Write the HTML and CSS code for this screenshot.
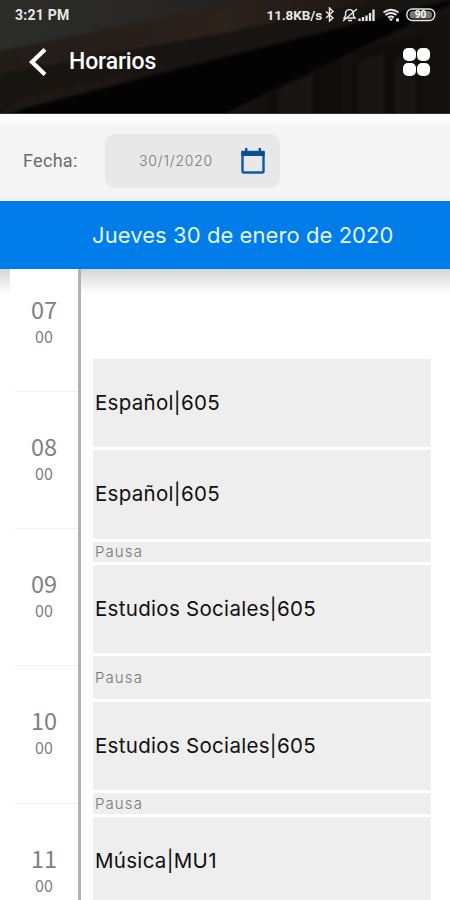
FILE: index.html
```html
<!DOCTYPE html>
<html lang="es">
<head>
<meta charset="utf-8">
<title>Horarios</title>
<link rel="stylesheet" href="styles.css">
</head>
<body>
<header class="top">
  <svg class="photo" viewBox="0 0 450 114" preserveAspectRatio="none" aria-hidden="true">
    <defs>
      <linearGradient id="wall" x1="0" y1="0" x2="1" y2="0"><stop offset="0" stop-color="#2c2d29"/><stop offset=".6" stop-color="#24211d"/><stop offset="1" stop-color="#14110f"/></linearGradient>
      <linearGradient id="beam" x1="0" y1="0" x2="1" y2="0"><stop offset="0" stop-color="#211b17"/><stop offset=".5" stop-color="#2c211b"/><stop offset="1" stop-color="#15100d"/></linearGradient>
      <filter id="soft" x="-5%" y="-5%" width="110%" height="110%" color-interpolation-filters="sRGB"><feGaussianBlur stdDeviation="1.5"/></filter>
    </defs>
    <rect width="450" height="114" fill="url(#wall)"/>
    <g filter="url(#soft)">
      <path d="M-5 52 225 6 260-5H460V120H-5Z" fill="url(#beam)"/>
      <path d="M-5 75 225 33 400-5H460V120H-5Z" fill="#171411"/>
      <path d="M20 98 125 74V120H-5Z" fill="#1e1814"/>
      <path d="M-5 120 25 108 225 57 450 0V120Z" fill="#030303"/>
      <path d="M225 113 450 5V120H225Z" fill="#14120f"/>
      <path d="M268 93 342 58V120H268ZM352 53 424 35V120H352Z" fill="#0f0e0c"/>
      <path d="M278 90 312 74V120H278ZM358 62 384 52V120H358ZM395 58H416V120H395Z" fill="#181512"/>
    </g>
    <rect y="113" width="450" height="1" fill="#30302e"/>
  </svg>
  <div class="status">
    <span class="clock">3:21 PM</span>
    <span class="net">11.8KB/s</span>
    <svg class="indicators" width="114" height="16" viewBox="0 0 114 16" fill="none" stroke="#e8e8e8" stroke-width="1.4">
      <path d="M2 4.5 9 11 5.5 14V1L9 4.5 2 11"/>
      <path d="M20 11h11l-1.6-2.2V6.5a4 4 0 0 0-7.7-1.4L21.500 8.500ZM24 13.500h4M19 14 33 2"/>
      <g stroke-width="2.300"><path d="M35.500 14v-2.500M39 14v-4M42.500 14V8.500M46 14V6M49.500 14V2.500"/></g>
      <path d="M59.500 5.500q7.500-5.500 15 0M61.500 8q5.500-4 11 0M64 10.500q3-2 6 0" stroke-width="1.900"/>
      <path d="m64.500 11.500 2.500 2.800 2.500-2.800ZM72 11.500h3v3h-3Z" fill="#e8e8e8" stroke="none"/>
      <rect x="82.800" y="2" width="28" height="11.500" rx="5.500"/>
      <rect x="85.500" y="4" width="22.500" height="7.500" rx="3.500" fill="#777" stroke="none"/>
      <text x="96.500" y="11.400" class="charge">90</text>
    </svg>
  </div>
  <div class="nav">
    <svg class="back" width="20" height="30" viewBox="0 0 20 30"><path d="M18 2.500 5 15l13 12.500" fill="none" stroke="#fff" stroke-width="4.200"/></svg>
    <h1>Horarios</h1>
    <div class="apps"><i></i><i></i><i></i><i></i></div>
  </div>
</header>
<section class="filter">
  <span class="label">Fecha:</span>
  <div class="date">
    <span>30/1/2020</span>
    <svg width="26" height="28" viewBox="0 0 26 28"><path d="M2.500 5h21v19.200q0 1.300-1.300 1.300H3.800q-1.300 0-1.300-1.300Z" fill="none" stroke="#0f59a8" stroke-width="2.400"/><path d="M1.300 4.500h23.400V9H1.300ZM5 1h2.400v4H5ZM18.600 1H21v4h-2.400Z" fill="#0f4c94"/></svg>
  </div>
</section>
<h2 class="day"><span>Jueves 30 de enero de 2020</span></h2>
<main class="schedule">
  <div class="hours">
    <div class="hour first"><b>07</b><small>00</small></div>
    <div class="hour"><b>08</b><small>00</small></div>
    <div class="hour"><b>09</b><small>00</small></div>
    <div class="hour"><b>10</b><small>00</small></div>
    <div class="hour"><b>11</b><small>00</small></div>
  </div>
  <div class="events">
    <div class="event lesson">Español|605</div>
    <div class="event lesson">Español|605</div>
    <div class="event pause">Pausa</div>
    <div class="event lesson">Estudios Sociales|605</div>
    <div class="event pause long">Pausa</div>
    <div class="event lesson">Estudios Sociales|605</div>
    <div class="event pause">Pausa</div>
    <div class="event lesson">Música|MU1</div>
  </div>
</main>
</body>
</html>
```
FILE: styles.css
```css
* { box-sizing: border-box; }
body { margin: 0; height: 900px; overflow: hidden; background: #fff; font-family: Inter, sans-serif; }
.top { position: relative; height: 114px; color: #fff; font-family: Roboto, sans-serif; }
.photo { position: absolute; inset: 0; width: 100%; height: 100%; z-index: -1; }
.status { height: 30px; display: flex; align-items: center; padding: 0 12px 0 15px; font-weight: 700; color: #e8e8e8; }
.clock { font-size: 14px; letter-spacing: .25px; }
.net { margin-left: auto; margin-right: 2px; font-size: 13.5px; letter-spacing: -.1px; }
.charge { font: 700 10px Roboto, sans-serif; fill: #fff; stroke: none; text-anchor: middle; }
.nav { height: 64px; display: flex; align-items: center; padding: 0 20px 0 27px; }
.nav h1 { margin: 0 auto 0 22px; font-size: 23px; font-weight: 500; line-height: 28px; letter-spacing: -.15px; padding-bottom: 1px; }
.apps { display: grid; grid-template-columns: 13px 13px; gap: 1.5px; }
.apps i { height: 13px; border-radius: 5px; background: #fff; }
.filter { height: 87px; display: flex; align-items: center; padding: 6px 24px 0 23px; background: linear-gradient(#fff 5px, #f4f4f5 12px, #f4f4f5 80px, #eff0f2); }
.label { width: 82px; font: 400 18px Roboto, sans-serif; letter-spacing: .3px; color: #6c6c6c; }
.date { width: 175px; height: 54px; display: flex; align-items: center; justify-content: space-between; padding: 0 14px 0 34px; border-radius: 10px; background: #e8e8e8; font-size: 14px; font-weight: 300; letter-spacing: .8px; color: #777; }
.day { position: relative; z-index: 1; margin: 0; height: 68px; padding-left: 92px; background: #007de8; color: #e2f5ff; font-size: 22px; font-weight: 400; line-height: 68px; letter-spacing: .07px; white-space: nowrap; }
.schedule { height: 631px; display: flex; padding-left: 10px; background: linear-gradient(#d4d4d4, #ececec 13px, #fff 25px); }
.hours { width: 71px; background: #fff; border-right: 3px solid #b3b3b3; }
.hour { height: 137.200px; display: flex; flex-direction: column; align-items: center; padding-top: 41px; margin-left: 5px; padding-right: 5px; border-bottom: 1px solid #efefef; font-family: "Noto Sans CJK SC", sans-serif; color: #808080; }
.hour.first { height: 123px; padding-top: 27px; }
.hour b { font-size: 23.500px; font-weight: 400; line-height: 27px; }
.hour small { font-size: 16px; line-height: 26px; }
.events { width: 338px; margin-left: 12px; padding-top: 90px; display: flex; flex-direction: column; gap: 3px; }
.event { flex: none; display: flex; align-items: center; padding-left: 2px; background: #eee; white-space: nowrap; }
.lesson { height: 88.300px; padding-bottom: 1px; font-size: 20.500px; letter-spacing: .3px; color: #101010; }
.pause { height: 20.500px; font-size: 15px; font-weight: 300; letter-spacing: 1.1px; color: #777; }
.pause.long { height: 42.500px; }
```
